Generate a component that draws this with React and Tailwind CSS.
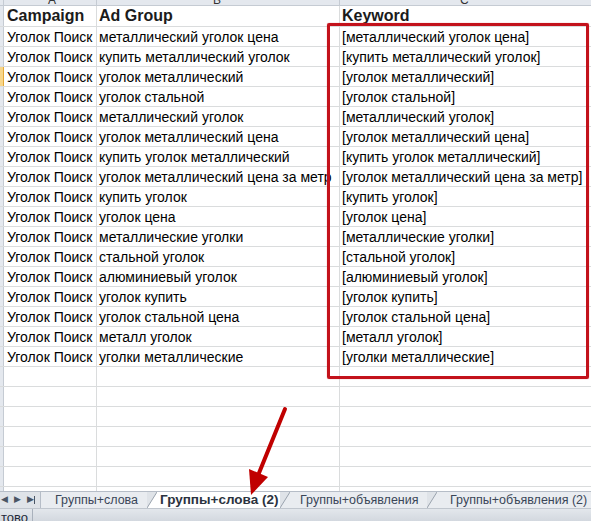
import React from "react";

const rows = [
  "металлический уголок цена",
  "купить металлический уголок",
  "уголок металлический",
  "уголок стальной",
  "металлический уголок",
  "уголок металлический цена",
  "купить уголок металлический",
  "уголок металлический цена за метр",
  "купить уголок",
  "уголок цена",
  "металлические уголки",
  "стальной уголок",
  "алюминиевый уголок",
  "уголок купить",
  "уголок стальной цена",
  "металл уголок",
  "уголки металлические",
];

const font = { fontFamily: '"Liberation Sans", Arial, sans-serif' };

function Row({ a, b, c, active, bold, tall }) {
  const text = bold
    ? "font-bold text-[16px] text-[#1b1b1b]"
    : "text-[14px] text-black pt-[2px]";
  return (
    <div className={`flex ${tall ? "h-[21px]" : "h-[20px]"} border-b border-[#dadcdd]`}>
      <div
        className={`w-[4px] shrink-0 border-r ${
          active ? "bg-[#f8d68a] border-[#e3a93a]" : "bg-[#e4e8ee] border-[#c5cbd3]"
        }`}
      />
      <div className={`w-[93px] shrink-0 border-r border-[#dadcdd] pl-[3px] flex items-center whitespace-nowrap overflow-hidden ${text} ${bold ? "" : "text-[13.5px]"}`}>
        {a}
      </div>
      <div className={`w-[243px] shrink-0 border-r border-[#dadcdd] pl-[2px] flex items-center whitespace-nowrap overflow-hidden ${text}`}>
        {b}
      </div>
      <div className={`flex-1 pl-[2px] flex items-center whitespace-nowrap overflow-hidden ${text}`}>
        {c}
      </div>
    </div>
  );
}

function Slant({ active }) {
  return (
    <svg width="10" height="16" className="shrink-0">
      <polygon points="0,16 10,0 10,16" fill={active ? "#ffffff" : "#e9ecf0"} />
      <line x1="0" y1="16" x2="10" y2="0" stroke="#9aa3ae" strokeWidth="1" />
    </svg>
  );
}

export default function App() {
  return (
    <div className="relative w-[591px] h-[521px] overflow-hidden bg-white" style={font}>
      <div className="h-[491px] overflow-hidden">
        {/* column header strip, mostly scrolled off */}
        <div className="flex h-[6px] border-b border-[#c5cbd3] bg-[#e4e8ee] text-[12px] text-[#333]">
          <div className="w-[4px] shrink-0 border-r border-[#c5cbd3]" />
          <div className="w-[93px] shrink-0 border-r border-[#c5cbd3] relative overflow-hidden">
            <span className="absolute left-[44px] -top-[9px]">A</span>
          </div>
          <div className="w-[243px] shrink-0 border-r border-[#c5cbd3] relative overflow-hidden">
            <span className="absolute left-[116px] -top-[9px]">B</span>
          </div>
          <div className="flex-1 relative overflow-hidden">
            <span className="absolute left-[120px] -top-[9px]">C</span>
          </div>
        </div>

        <Row a="Campaign" b="Ad Group" c="Keyword" bold tall />
        {rows.map((r, i) => (
          <Row key={i} a="Уголок Поиск" b={r} c={`[${r}]`} active={i === 2} />
        ))}
        {Array.from({ length: 7 }).map((_, i) => (
          <Row key={"e" + i} a="" b="" c="" />
        ))}
      </div>

      {/* sheet tabs */}
      <div className="flex h-[17px] bg-[#dfe3e8] border-t border-[#b6bdc7] text-[12.5px] text-[#3a4658]">
        <div className="w-[41px] shrink-0 flex items-center gap-[6px] pl-[1px] text-[9px] text-[#4a5564] border-r border-[#b6bdc7]">
          <span>◀</span>
          <span>▶</span>
          <span className="flex items-center">
            ▶<span className="w-[1px] h-[8px] bg-[#4a5564]" />
          </span>
        </div>
        <div className="w-[106px] shrink-0 bg-[#e9ecf0] pl-[14px] flex items-center whitespace-nowrap">
          Группы+слова
        </div>
        <Slant active />
        <div className="w-[123px] shrink-0 bg-white pl-[3px] flex items-center whitespace-nowrap font-bold text-[13.5px] text-[#2b3340]">
          Группы+слова (2)
        </div>
        <Slant />
        <div className="w-[137px] shrink-0 bg-[#e9ecf0] pl-[10px] flex items-center whitespace-nowrap">
          Группы+объявления
        </div>
        <Slant />
        <div className="flex-1 bg-[#e9ecf0] pl-[13px] flex items-center whitespace-nowrap overflow-hidden">
          Группы+объявления (2)
        </div>
      </div>

      {/* status bar */}
      <div className="flex h-[13px] bg-gradient-to-b from-[#e3e7ec] to-[#d3d8df] border-t border-[#c0c6ce]">
        <div className="w-[33px] shrink-0 border-r border-[#a9b1bc] overflow-hidden text-[13px] text-[#1f2a3a] leading-[18px] pl-[1px]">
          тово
        </div>
      </div>

      {/* highlight box */}
      <div className="absolute left-[327px] top-[23px] w-[262px] h-[356px] border-[3px] border-[#c3121b] rounded-[2px] shadow-[0_0_1px_#e05a5f]" />

      {/* arrow */}
      <svg className="absolute left-0 top-0" width="591" height="521">
        <line x1="285" y1="409" x2="259" y2="473" stroke="#c00000" strokeWidth="4" strokeLinecap="round" />
        <polygon points="251,495 249,469 268,477" fill="#c00000" />
      </svg>
    </div>
  );
}
